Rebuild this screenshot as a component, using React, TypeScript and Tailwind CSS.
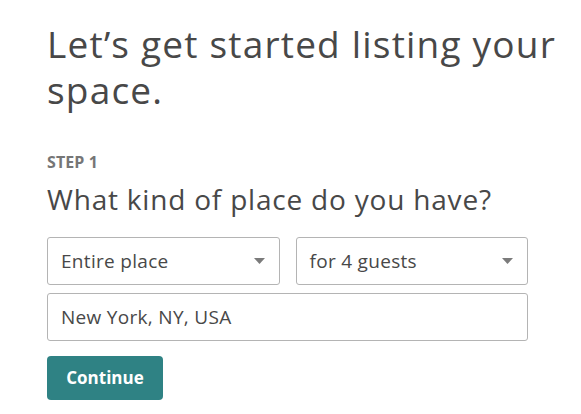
import React from 'react'

const Caret = () => (
    <svg width="11" height="6" viewBox="0 0 11 6" className="shrink-0">
        <path d="M0 0 L11 0 L5.5 6 Z" fill="#7b7b7b" />
    </svg>
)

const SelectBox = ({ label }: { label: string }) => (
    <div className="flex-1 h-12 flex items-center justify-between pl-[13px] pr-[14px] border border-[#b4b4b4] rounded-[3px] bg-white">
        <span className="text-[19px] tracking-[0.3px] text-[#484848]">{label}</span>
        <Caret />
    </div>
)

export default function App() {
    return (
        <div className="min-h-screen bg-white pl-[47px] pr-[20px] pt-[21px] text-[#484848]" style={{ fontFamily: '"Open Sans", Roboto, sans-serif' }}>
            <h1 className="text-[37px] leading-[46px] font-normal tracking-[1.2px]">
                Let’s get started listing your space.
            </h1>

            <div className="mt-[40px] text-[16px] font-bold text-[#767676] leading-[18px] tracking-[0.1px]">STEP 1</div>
            <h2 className="mt-[10px] text-[28px] leading-[36px] font-normal tracking-[0.8px]">What kind of place do you have?</h2>

            <div className="mt-[20px] w-[481px] flex gap-4">
                <SelectBox label="Entire place" />
                <SelectBox label="for 4 guests" />
            </div>

            <div className="mt-2 w-[481px] h-12 flex items-center pl-[13px] border border-[#b4b4b4] rounded-[3px]">
                <span className="text-[19px] tracking-[0.3px] text-[#484848]">New York, NY, USA</span>
            </div>

            <button className="mt-[15px] w-[116px] h-[44px] rounded-[4px] bg-[#2f8284] text-white text-[17px] font-bold">
                Continue
            </button>
        </div>
    )
}
